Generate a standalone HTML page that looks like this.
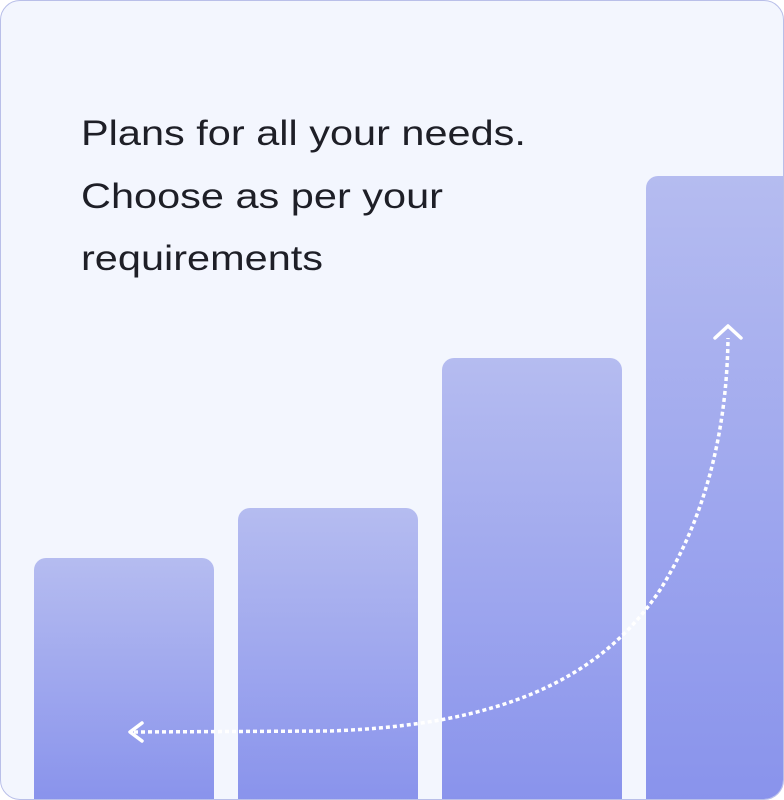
<!DOCTYPE html>
<html><head><style>
html,body{margin:0;padding:0;width:784px;height:800px;overflow:hidden;background:#fff}
.card{position:absolute;left:0;top:0;width:782px;height:798px;border:1px solid #b9bfe9;border-radius:20px;background:#f3f6fe;overflow:hidden}
.bar{position:absolute;bottom:-2px;border-radius:12px 12px 0 0;background:linear-gradient(#b5bcf0,#8993ec)}
.t{position:absolute;left:80px;top:102px;font:35px/62.5px "Liberation Sans",sans-serif;color:#1e1f27;transform:scaleX(1.185);transform-origin:0 0;white-space:nowrap}
</style></head><body>
<div class="card">
<div class="bar" style="left:33px;width:180px;top:557px"></div>
<div class="bar" style="left:237px;width:180px;top:507px"></div>
<div class="bar" style="left:441px;width:180px;top:357px"></div>
<div class="bar" style="left:645px;width:150px;top:175px"></div>
<div class="t">Plans for all your needs.<br>Choose as per your<br>requirements</div>
<svg width="784" height="800" style="position:absolute;left:-1px;top:-1px">
<path d="M134 732 L330 731 C500 725 600 680 660 590 C710 510 727 420 728 338" fill="none" stroke="#fff" stroke-width="3.5" stroke-dasharray="4 3"/>
<path d="M142 723 L130 732 L142 741" fill="none" stroke="#fff" stroke-width="3.5" stroke-linecap="round" stroke-linejoin="round"/>
<path d="M715 338 L728 326 L741 338" fill="none" stroke="#fff" stroke-width="3.5" stroke-linecap="round" stroke-linejoin="round"/>
</svg>
</div>
</body></html>
